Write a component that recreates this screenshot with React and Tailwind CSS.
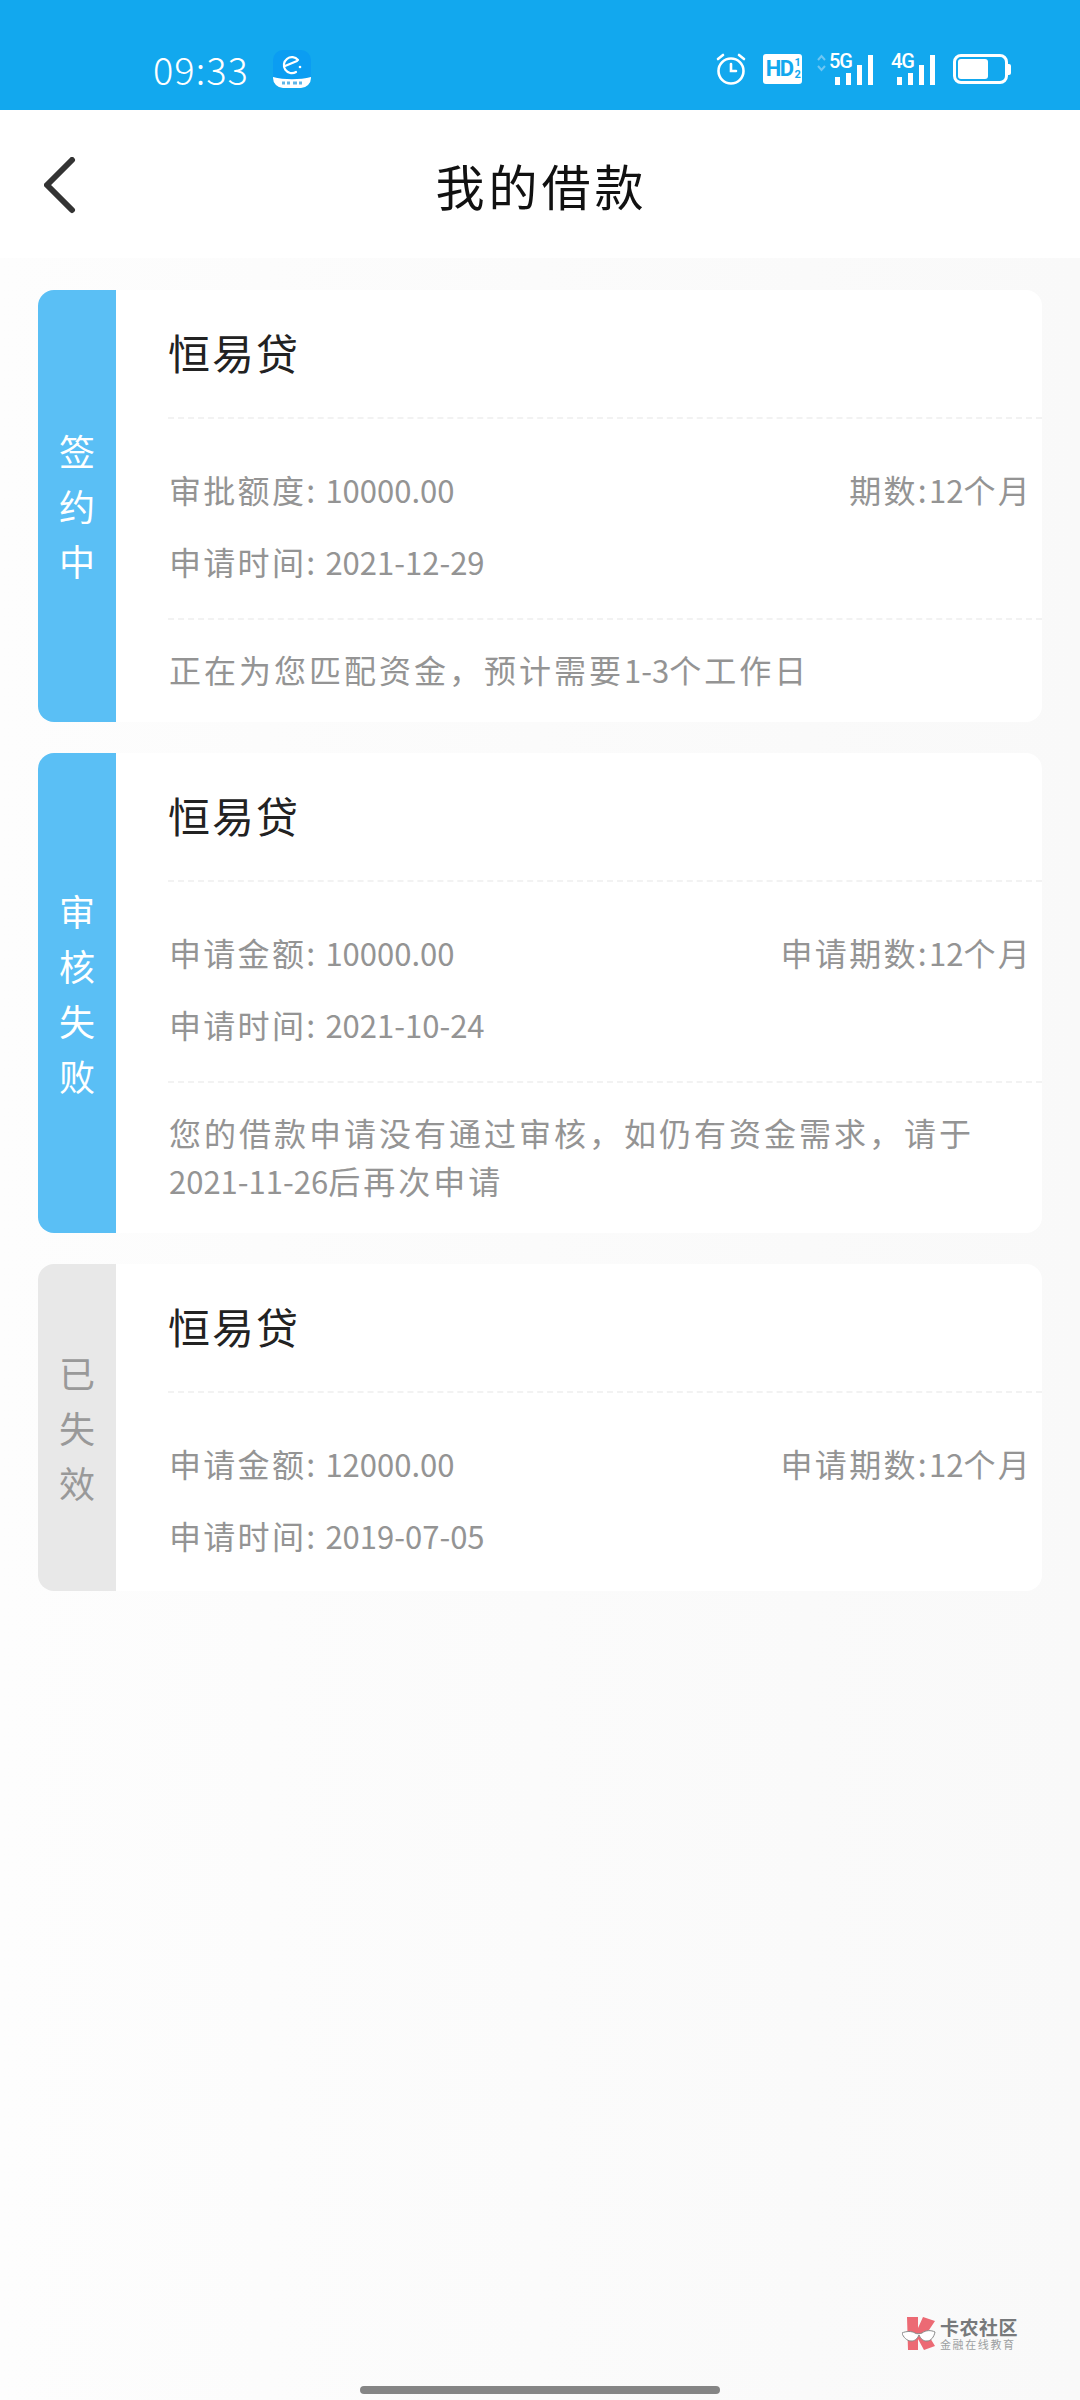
import React from "react";

const loans = [
  {
    status: ["签", "约", "中"],
    tabClass: "bg-[#5abff5] text-white",
    height: "h-[432px]",
    mt: "mt-[32px]",
    left: "审批额度",
    amount: "10000.00",
    right: "期数",
    date: "2021-12-29",
    note: [["正在为您匹配资金，预计需要", "1-3", "个工作日"]],
  },
  {
    status: ["审", "核", "失", "败"],
    tabClass: "bg-[#5abff5] text-white",
    height: "h-[480px]",
    mt: "mt-[31px]",
    left: "申请金额",
    amount: "10000.00",
    right: "申请期数",
    date: "2021-10-24",
    note: [["您的借款申请没有通过审核，如仍有资金需求，请于"], ["", "2021-11-26", "后再次申请"]],
  },
  {
    status: ["已", "失", "效"],
    tabClass: "bg-[#e8e8e8] text-[#999999]",
    height: "h-[327px]",
    mt: "mt-[31px]",
    left: "申请金额",
    amount: "12000.00",
    right: "申请期数",
    date: "2019-07-05",
    note: null,
  },
];

function Bars({ label }) {
  return (
    <div className="relative w-[44px] h-[31px]">
      <span className="absolute left-0 top-[-3px] text-[20px] leading-[20px] font-medium tracking-[-1px] text-white font-['Roboto',sans-serif]">{label}</span>
      <div className="absolute right-0 bottom-0 flex items-end gap-[6px]">
        <div className="w-[5px] h-[8px] bg-white" />
        <div className="w-[5px] h-[12px] bg-white" />
        <div className="w-[5px] h-[20px] bg-white" />
        <div className="w-[5px] h-[30px] bg-white" />
      </div>
    </div>
  );
}

function StatusBar() {
  return (
    <div className="h-[110px] bg-[#12a8ee] flex items-center pt-[28px] pl-[153px] pr-[69px] text-white">
      <span className="text-[38px] leading-none tracking-[1px] font-light w-[120px]">09:33</span>
      {/* app icon */}
      <svg width="38" height="38" viewBox="0 0 38 38">
        <rect width="38" height="38" rx="10" fill="#0b9df2" />
        <path d="M0 27c11 3 27 3 38 0v1a10 10 0 0 1-10 10H10A10 10 0 0 1 0 28z" fill="#ffffff" />
        <path d="M25 10a8 8 0 1 0-2 12M12 16l12-5" fill="none" stroke="#ffffff" strokeWidth="2.200" strokeLinecap="round" />
        <circle cx="27" cy="17" r="1.300" fill="#ffffff" />
        <path d="M9 33h3M14 33h3M20 33h4M26 33h3" stroke="#5fb5e8" strokeWidth="3" />
      </svg>
      <div className="ml-auto flex items-center">
        <svg width="30" height="32" viewBox="0 0 30 32" fill="none" stroke="#ffffff" strokeWidth="2.600">
          <circle cx="15" cy="18" r="12.500" />
          <path d="M15 11v7h5M2 6l5-4M28 6l-5-4" strokeLinecap="round" />
        </svg>
        <div className="ml-[17px] w-[39px] h-[30px] rounded-[3px] bg-white flex items-center justify-center text-[#12a8ee] text-[22px] font-bold leading-none tracking-[-1.5px] font-['Roboto',sans-serif]">
          HD
          <span className="flex flex-col text-[11px] leading-[12px] ml-[2px] font-bold">
            <span>1</span>
            <span>2</span>
          </span>
        </div>
        <svg width="9" height="18" viewBox="0 0 9 18" className="ml-[15px] mr-[3px] mt-[-12px]" fill="none" stroke="#6ec6f3" strokeWidth="2">
          <path d="M1 6l3.500-4 3.500 4M1 12l3.500 4 3.500-4" />
        </svg>
        <Bars label="5G" />
        <div className="ml-[18px]"><Bars label="4G" /></div>
        <div className="ml-[18px] w-[55px] h-[30px] rounded-[8px] border-[3px] border-white p-[2px]">
          <div className="w-[30px] h-full bg-white rounded-[3px]" />
        </div>
        <div className="w-[3px] h-[11px] bg-white rounded-r-[2px]" />
      </div>
    </div>
  );
}

function Colon() {
  return <span className="mr-[8px]">:</span>;
}

function Digits({ children }) {
  return <span className="text-[31px] tracking-normal">{children}</span>;
}

function LoanCard({ loan }) {
  return (
    <div className={`${loan.mt} ${loan.height} flex rounded-[16px] overflow-hidden bg-white`}>
      <div className={`w-[78px] pb-[2px] flex flex-col items-center justify-center gap-[19px] text-[36px] leading-[36px] ${loan.tabClass}`}>
        {loan.status.map((c) => (
          <span key={c}>{c}</span>
        ))}
      </div>
      <div className="flex-1 pl-[52px]">
        <div className="h-[129px] border-b-2 border-dashed border-[#f2f2f2] flex items-center">
          <span className="text-[#222222] text-[42px] leading-none pb-[4px] tracking-[2px]">恒易贷</span>
        </div>
        <div className="pt-[52px] pl-[1px] pr-[10px] text-[#949494] text-[32px] leading-[36px] tracking-[2.3px]">
          <div className="flex justify-between">
            <span>
              {loan.left}
              <Colon />
              <Digits>{loan.amount}</Digits>
            </span>
            <span>
              {loan.right}
              <span>:</span>
              <Digits>12</Digits>
              个月
            </span>
          </div>
          <div className="mt-[35px]">
            申请时间
            <Colon />
            <Digits>{loan.date}</Digits>
          </div>
        </div>
        {loan.note && (
          <div className="mt-[38px] border-t-2 border-dashed border-[#f2f2f2] pl-[1px] pt-[25px] text-[#949494] text-[32px] leading-[48px] tracking-[3px]">
            {loan.note.map((line) => (
              <div key={line.join("")}>
                {line[0]}
                {line[1] && <Digits>{line[1]}</Digits>}
                {line[2]}
              </div>
            ))}
          </div>
        )}
      </div>
    </div>
  );
}

export default function App() {
  return (
    <div className="w-[1080px] h-[2400px] flex flex-col bg-linear-to-r from-[#fdfdfd] to-[#f9f9f9] font-['Noto_Sans_CJK_SC','Noto_Sans',sans-serif]">
      <StatusBar />
      <div className="h-[148px] bg-white flex items-center relative">
        <svg width="34" height="58" viewBox="0 0 34 58" className="ml-[44px] mt-[3px]">
          <path d="M28 3L3 28l25 25" fill="none" stroke="#333333" strokeWidth="6" strokeLinecap="round" strokeLinejoin="round" />
        </svg>
        <span className="absolute inset-x-0 pl-[3px] text-center text-[49px] leading-none text-[#111111] tracking-[4px]">我的借款</span>
      </div>
      <div className="flex-1 px-[38px] relative">
        {loans.map((loan) => (
          <LoanCard key={loan.date} loan={loan} />
        ))}
        <div className="absolute right-[62px] bottom-[49px] flex items-center gap-[4px]">
          <svg width="34" height="34" viewBox="0 0 34 34">
            <path d="M5 0h11v11L21 0l12 4-8 12 8 13-11 4-6-11v11H6z" fill="#ec6a74" />
            <path d="M0 16c4-2 10-2 13 0 1 1 5 1 7 0 4-3 9-3 13-1-1 5-4 9-8 9s-6-2-8-6c-2 4-4 6-8 6s-8-4-9-8z" fill="#ffffff" stroke="#8a8a8a" strokeWidth="1" />
          </svg>
          <div className="flex flex-col items-start">
            <span className="text-[19px] leading-[21px] font-bold text-[#77797b] tracking-[0.5px]">卡农社区</span>
            <span className="text-[11px] leading-[14px] text-[#9d9fa1] tracking-[1.6px]">金融在线教育</span>
          </div>
        </div>
        <div className="absolute left-[360px] bottom-[6px] w-[360px] h-[8px] rounded-full bg-[#858585]" />
      </div>
    </div>
  );
}
